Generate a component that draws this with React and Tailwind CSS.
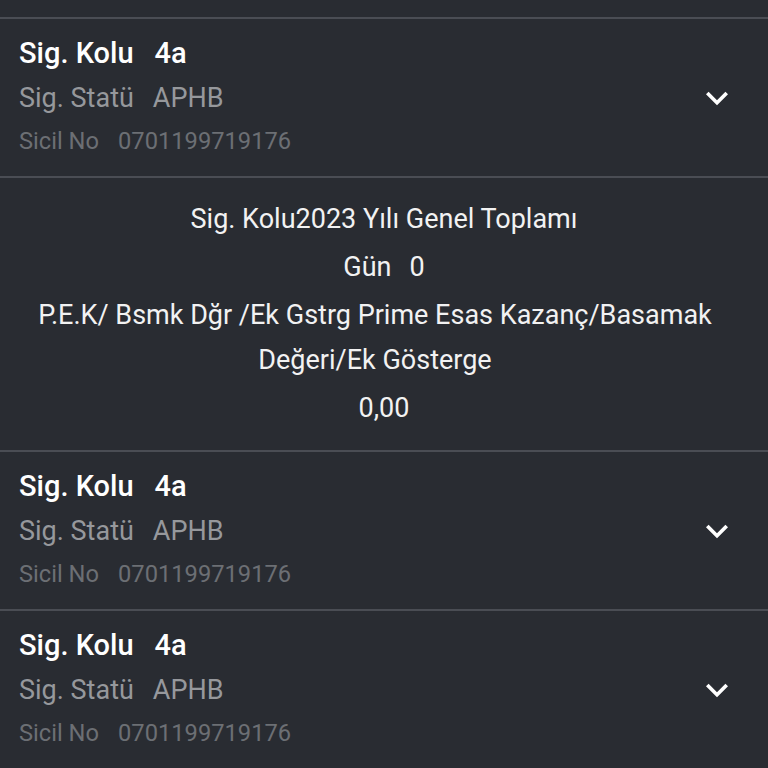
import React from "react";

const font = { fontFamily: "Roboto, 'Noto Sans', sans-serif" };

function Chevron() {
  return (
    <svg width="44" height="44" viewBox="0 0 24 24" className="shrink-0">
      <path d="M16.59 8.59L12 13.17 7.41 8.59 6 10l6 6 6-6z" fill="#ffffff" />
    </svg>
  );
}

function Divider() {
  return <div className="h-[2px] bg-[#4a4d54]" />;
}

function Item() {
  return (
    <div className="flex items-center justify-between pl-[19px] pr-[29px] pt-[13px] pb-[12px]">
      <div className="flex flex-col">
        <div className="h-[44px] flex items-center text-[29px] font-medium text-white">
          <span>Sig. Kolu</span>
          <span className="ml-[21px]">4a</span>
        </div>
        <div className="h-[44px] flex items-center text-[27px] text-[#96989c]">
          <span>Sig. Statü</span>
          <span className="ml-[19px]">APHB</span>
        </div>
        <div className="h-[44px] flex items-center text-[23.7px] text-[#6c6f74]">
          <span>Sicil No</span>
          <span className="ml-[19px]">0701199719176</span>
        </div>
      </div>
      <Chevron />
    </div>
  );
}

export default function App() {
  return (
    <div className="w-[768px] h-[768px] overflow-hidden bg-[#292c32]" style={font}>
      <div className="h-[17px]" />
      <Divider />
      <Item />
      <Divider />
      <div className="flex flex-col items-center px-[18px] pt-[19px] pb-[19px] gap-[3px] text-[27px] text-[#f2f2f2] text-center">
        <div className="leading-[45px]">Sig. Kolu2023 Yılı Genel Toplamı</div>
        <div className="leading-[45px]">
          Gün<span className="ml-[18px]">0</span>
        </div>
        <div className="leading-[45px] pr-[18px]">
          P.E.K/ Bsmk Dğr /Ek Gstrg Prime Esas Kazanç/Basamak Değeri/Ek Gösterge
        </div>
        <div className="leading-[45px]">0,00</div>
      </div>
      <Divider />
      <Item />
      <Divider />
      <Item />
    </div>
  );
}
